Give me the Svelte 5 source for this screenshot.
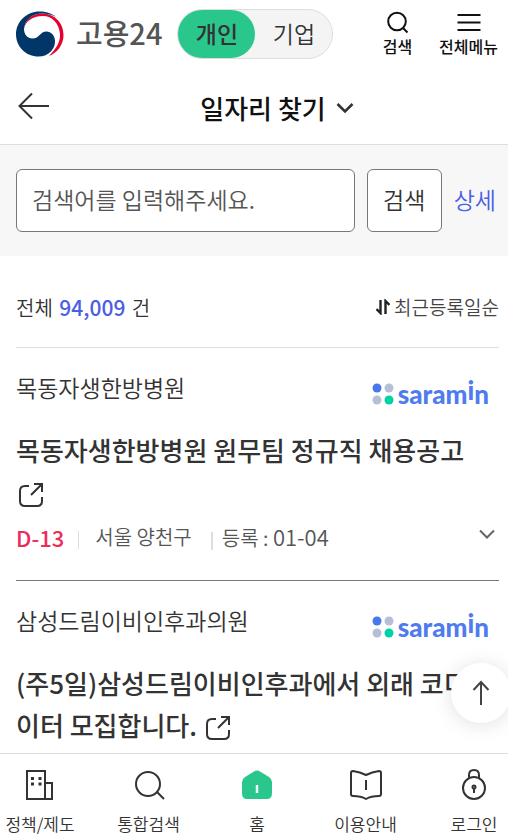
<script>
	let userType = $state("개인");
	let keyword = $state("");

	const userTypes = ["개인", "기업"];

	const jobs = [
		{
			company: "목동자생한방병원",
			title: "목동자생한방병원 원무팀 정규직 채용공고",
			dday: "D-13",
			area: "서울 양천구",
			date: "01-04"
		},
		{
			company: "삼성드림이비인후과의원",
			title: "(주5일)삼성드림이비인후과에서 외래 코디네이터 모집합니다."
		}
	];

	const menus = [
		{ id: "policy", label: "정책/제도" },
		{ id: "search", label: "통합검색" },
		{ id: "home", label: "홈" },
		{ id: "guide", label: "이용안내" },
		{ id: "login", label: "로그인" }
	];
</script>

<div class="page">
	<header class="top">
		<a class="logo" href="#home">
			<svg width="48" height="46" viewBox="0 0 48 46">
				<path d="M8 18C9 8 17 2.500 26 2.500 40 3 47.500 13 47.500 24 47.500 34 41 42 33 45 40 38 44.500 31 44 23 43 12 36 5 27 5 16 5 9 11 8 18Z" fill="#e6002d" />
				<path d="M40 6C35 2 30 .5 23.500.500 10.500.500 0 10.700 0 23.200 0 35.600 10 45.500 22.500 45.500 33 45.500 39.500 37.500 39 29.500 38.500 24 35 20.500 30.500 20.500 24 20.500 23.500 27.500 16.500 27.500 11.500 27.500 8 23.500 8 18 9 8 17 2.500 26 2.500 31 2.500 36 4 40 6Z" fill="#003668" />
			</svg>
			<span>고용24</span>
		</a>
		<div class="toggle">
			{#each userTypes as type}
				<button class:active={userType === type} onclick={() => (userType = type)}>{type}</button>
			{/each}
		</div>
		<nav class="tools">
			<button>
				<svg width="24" height="24" viewBox="0 0 24 24" class="line">
					<circle cx="12" cy="11.500" r="8.800" />
					<path d="M17.500 17.500l5 5" />
				</svg>
				검색
			</button>
			<button>
				<svg width="24" height="24" viewBox="0 0 24 24" class="line">
					<path d="M.5 5h23M.5 12.500h23M.5 20h23" />
				</svg>
				전체메뉴
			</button>
		</nav>
	</header>

	<div class="subject">
		<button class="back" aria-label="뒤로">
			<svg width="32" height="28" viewBox="0 0 32 28" class="line">
				<path d="M14 1.500L1.500 14 14 26.500M1.500 14H31" />
			</svg>
		</button>
		<button class="name">
			일자리 찾기
			<svg width="18" height="12" viewBox="0 0 18 12">
				<path d="M1.500 2L9 9.500 16.500 2" fill="none" stroke="#333" stroke-width="2.600" />
			</svg>
		</button>
	</div>

	<form class="search" onsubmit={(e) => e.preventDefault()}>
		<input type="text" aria-label="검색어" placeholder="검색어를 입력해주세요." bind:value={keyword} />
		<button>검색</button>
		<a href="#detail">상세</a>
	</form>

	<main>
		<div class="summary">
			<p>전체 <strong>94,009</strong> 건</p>
			<button>
				<svg width="14" height="16" viewBox="0 0 14 16">
					<path d="M4.500 1v13L.500 10M9.500 15V2l4 4" fill="none" stroke="#222" stroke-width="2.400" />
				</svg>
				최근등록일순
			</button>
		</div>

		{#each jobs as job}
			<article class="job">
				<div class="company">
					<span>{job.company}</span>
					<div class="saramin">
						<svg width="22" height="22" viewBox="0 0 22 22">
							<circle cx="5" cy="5" r="4.500" fill="#4876ef" />
							<circle cx="17" cy="5" r="4.500" fill="#b5c0d6" />
							<circle cx="5" cy="17" r="4.500" fill="#b5c0d6" />
							<circle cx="17" cy="17" r="4.500" fill="#00d2a8" />
						</svg>
						<span>saram<sup>i</sup>n</span>
					</div>
				</div>
				<h2>
					<a href="#job">{job.title}
						<svg width="26" height="26" viewBox="0 0 26 26" class="line">
							<path d="M11 4H7Q2 4 2 9v10q0 5 5 5h12q5 0 5-5v-4M16 2h8v8M24 2L13 13" />
						</svg></a>
				</h2>
				{#if job.dday}
					<div class="meta">
						<strong>{job.dday}</strong>
						<span class="area">{job.area}</span>
						<span class="date">등록 : <time>{job.date}</time></span>
						<button aria-label="펼치기">
							<svg width="16" height="10" viewBox="0 0 16 10">
								<path d="M1 1.500l7 7 7-7" fill="none" stroke="#666" stroke-width="2" />
							</svg>
						</button>
					</div>
				{/if}
			</article>
		{/each}
	</main>

	<button class="to-top" aria-label="맨 위로">
		<svg width="18" height="26" viewBox="0 0 18 26">
			<path d="M9 25V2M1.500 10L9 2l7.500 8" fill="none" stroke="#444" stroke-width="2" />
		</svg>
	</button>

	<nav class="bottom">
		{#each menus as menu}
			<a href="#{menu.id}">
				<svg width="34" height="34" viewBox="0 0 34 34" class="line">
					{#if menu.id === "policy"}
						<path d="M4 3h18v28H4zM22 15h7v16h-7" />
						<path d="M8 10.500h3M15.500 10.500h3M8 16h3M15.500 16h3" stroke-width="3" />
					{:else if menu.id === "search"}
						<circle cx="16" cy="16" r="12" />
						<path d="M25 24l7 7" />
					{:else if menu.id === "home"}
						<path d="M14 3.500q3-2 6 0l9 5.500q3 2 3 5v11q0 6-5 6H7q-5 0-5-6V14q0-3 3-5z" fill="#2ac78d" stroke="none" />
						<path d="M17 17v8" stroke="#fff" stroke-width="2.500" />
					{:else if menu.id === "guide"}
						<path d="M17 7Q11 4 4 3 2 3 2 5v21q0 2 2 2 8 0 13 3 5-3 13-3 2 0 2-2V5q0-2-2-2-7 1-13 4zM17 12v10" />
					{:else}
						<circle cx="17" cy="20" r="11" />
						<path d="M12 10V7q0-5 5-5t5 5v3M17 20v5" />
						<circle cx="17" cy="19" r="1.500" />
					{/if}
				</svg>
				{menu.label}
			</a>
		{/each}
	</nav>
</div>

<style>
	:global(body) {
		margin: 0;
		background: #fff;
	}

	.page {
		font-family: "Noto Sans CJK KR", sans-serif;
		font-weight: 350;
		font-size: 20px;
		color: #333;
		min-height: 100vh;
		display: flex;
		flex-direction: column;
	}

	.page * {
		box-sizing: border-box;
	}

	button, input {
		font: inherit;
		color: inherit;
		background: none;
		border: 0;
		padding: 0;
		margin: 0;
	}

	button {
		cursor: pointer;
	}

	a {
		color: inherit;
		text-decoration: none;
	}

	svg {
		flex: none;
	}

	.line {
		fill: none;
		stroke: #333;
		stroke-width: 2;
	}

	/* header */
	.top {
		display: flex;
		align-items: center;
		height: 68px;
		padding: 0 10px 0 16px;
	}

	.logo {
		display: flex;
		align-items: center;
		gap: 12px;
		font-size: 29px;
		line-height: 40px;
		font-weight: 500;
		color: #555;
	}

	.logo span {
		padding-bottom: 4px;
	}

	.toggle {
		display: flex;
		height: 50px;
		margin-left: 15px;
		border: 1px solid #ddd;
		border-radius: 25px;
		background: #f4f4f4;
	}

	.toggle button {
		width: 77px;
		border-radius: 25px;
		padding-bottom: 2px;
		font-size: 23px;
		line-height: 32px;
	}

	.toggle .active {
		background: #2ac78d;
		font-weight: 500;
	}

	.tools {
		display: flex;
		gap: 27px;
		margin-left: auto;
	}

	.tools button {
		display: flex;
		flex-direction: column;
		align-items: center;
		font-size: 16px;
		line-height: 24px;
		font-weight: 500;
		color: #111;
	}

	.tools .line {
		stroke: #111;
	}

	.subject {
		display: flex;
		align-items: center;
		height: 77px;
		padding-left: 18px;
		border-bottom: 1px solid #ddd;
	}

	.back, .name {
		display: flex;
		align-items: center;
	}

	.name {
		flex: 1;
		justify-content: center;
		gap: 10px;
		padding: 3px 4px 0 0;
		font-size: 26px;
		line-height: 40px;
		font-weight: 500;
		color: #111;
	}

	/* search */
	.search {
		display: flex;
		align-items: center;
		gap: 12px;
		padding: 24px 12px 24px 16px;
		background: #f7f7f7;
		font-size: 23px;
	}

	.search input {
		flex: 1;
		min-width: 0;
		height: 63px;
		padding: 0 15px 4px;
		background: #fff;
		border: 1px solid #777;
		border-radius: 6px;
	}

	.search input::placeholder {
		color: #555;
		opacity: 1;
	}

	.search button {
		width: 75px;
		height: 63px;
		padding-bottom: 4px;
		background: #fff;
		border: 1px solid #777;
		border-radius: 6px;
	}

	.search a {
		padding-bottom: 4px;
		color: #4b5ee4;
	}

	/* list */
	main {
		flex: 1;
		padding: 0 9px 0 16px;
	}

	.summary {
		display: flex;
		justify-content: space-between;
		align-items: center;
		height: 92px;
		padding-top: 10px;
		border-bottom: 1px solid #ddd;
	}

	.summary p {
		margin: 0;
	}

	.summary strong {
		margin: 0 2px;
		font-size: 21px;
		font-weight: 500;
		color: #4b5ee4;
	}

	.summary button {
		display: flex;
		align-items: center;
		gap: 4px;
		font-size: 19px;
		color: #444;
	}

	.job {
		padding: 22px 0 28px;
		border-bottom: 1px solid #777;
	}

	.job:last-child {
		padding-bottom: 0;
		border: 0;
	}

	.company {
		display: flex;
		justify-content: space-between;
		align-items: flex-start;
		font-size: 23px;
		line-height: 34px;
	}

	.saramin {
		display: flex;
		align-items: center;
		gap: 4px;
		padding: 12px 10px 0 0;
		font-family: Lato, sans-serif;
		font-size: 26px;
		font-weight: 900;
		line-height: 24px;
		color: #4f7bf0;
	}

	.saramin sup {
		font-size: 26px;
		line-height: 0;
		vertical-align: 4px;
	}

	h2 {
		margin: 23px 0 0;
		padding-right: 4px;
		font-size: 26px;
		line-height: 42px;
		font-weight: 500;
		word-break: break-all;
	}

	h2 svg {
		margin-left: 2px;
		vertical-align: -5px;
	}

	.meta {
		display: flex;
		align-items: center;
		height: 30px;
		margin-top: 9px;
		line-height: 30px;
		color: #555;
	}

	.meta strong, time {
		font-size: 22px;
	}

	.meta strong {
		font-weight: 500;
		color: #ee2b5b;
	}

	.area::before, .date::before {
		content: "";
		display: inline-block;
		height: 18px;
		border-left: 1px solid #ddd;
		margin: 0 16px 0 14px;
		vertical-align: -4px;
	}

	.date::before {
		border-left-width: 2px;
		margin: 0 9px 0 19px;
	}

	.meta button {
		display: flex;
		margin-left: auto;
		padding: 0 4px 6px 0;
	}

	.to-top {
		position: fixed;
		right: -3px;
		bottom: 115px;
		z-index: 1;
		display: flex;
		align-items: center;
		justify-content: center;
		width: 60px;
		height: 60px;
		border-radius: 50%;
		background: #fff;
		box-shadow: 0 2px 20px rgba(0, 0, 0, 0.12);
	}

	.bottom {
		position: sticky;
		bottom: 0;
		z-index: 2;
		display: flex;
		justify-content: space-between;
		height: 85px;
		padding: 14px 0 0 6px;
		background: #fff;
		border-top: 1px solid #ddd;
	}

	.bottom a {
		display: flex;
		flex-direction: column;
		align-items: center;
		gap: 9px;
		width: 68px;
		font-size: 17px;
		line-height: 26px;
		white-space: nowrap;
	}
</style>
